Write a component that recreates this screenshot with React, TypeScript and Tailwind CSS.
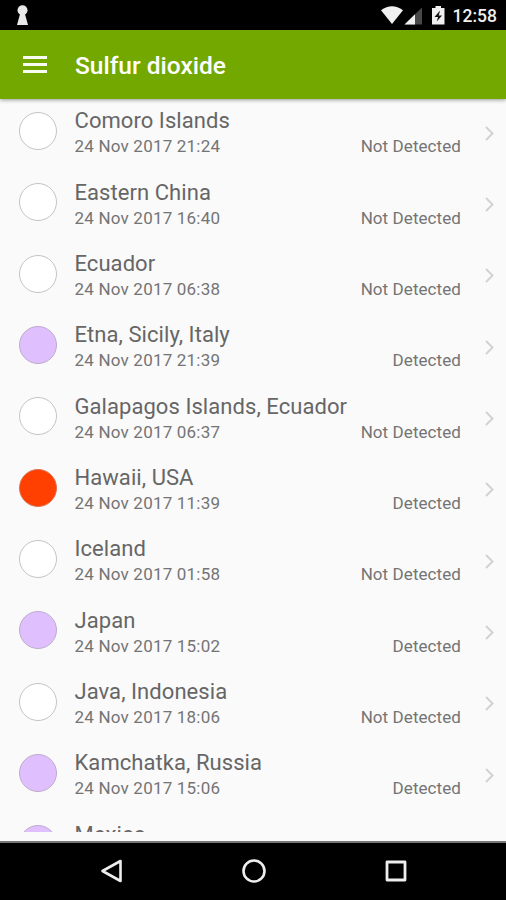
import React from 'react';

interface Reading {
    place: string;
    time: string;
    level: 'none' | 'low' | 'high';
}

const READINGS: Reading[] = [
    { place: 'Comoro Islands', time: '24 Nov 2017 21:24', level: 'none' },
    { place: 'Eastern China', time: '24 Nov 2017 16:40', level: 'none' },
    { place: 'Ecuador', time: '24 Nov 2017 06:38', level: 'none' },
    { place: 'Etna, Sicily, Italy', time: '24 Nov 2017 21:39', level: 'low' },
    { place: 'Galapagos Islands, Ecuador', time: '24 Nov 2017 06:37', level: 'none' },
    { place: 'Hawaii, USA', time: '24 Nov 2017 11:39', level: 'high' },
    { place: 'Iceland', time: '24 Nov 2017 01:58', level: 'none' },
    { place: 'Japan', time: '24 Nov 2017 15:02', level: 'low' },
    { place: 'Java, Indonesia', time: '24 Nov 2017 18:06', level: 'none' },
    { place: 'Kamchatka, Russia', time: '24 Nov 2017 15:06', level: 'low' },
    { place: 'Mexico', time: '', level: 'low' },
];

const DOT_STYLES = {
    none: 'bg-white border-[#c4c4c4]',
    low: 'bg-[#e0bfff] border-[#bdabcc]',
    high: 'bg-[#ff4000] border-[#e0704c]',
};

const StatusBar = () => (
    <div className="h-[30px] shrink-0 bg-black flex items-center pl-[17px] pr-[9px]">
        <svg className="w-3 h-5" viewBox="0 0 12 20" fill="#e9e9e9">
            <circle cx="5.5" cy="5.3" r="5" />
            <path d="M3.3 8h4.4L11 20H0z" />
        </svg>
        <svg className="w-[65px] h-[22px] ml-auto" viewBox="0 0 65 22">
            <path d="M1 6.2Q12 -1.8 23 6.2L12 20Z" fill="#f0f0f0" />
            <path d="M42 3.5V20.5H24.5Z" fill="#484848" />
            <path d="M35 10.3V20.5H24.5Z" fill="#f0f0f0" />
            <path d="M55.5 2h5.5v2H64.5v16.5H52V4h3.5z" fill="#f0f0f0" />
            <path d="M60.1 6.5L54.5 12.9h3.6L56.7 17.5l5.4-6h-3.4z" fill="#111" />
        </svg>
        <span className="ml-[8px] mt-[3px] text-[17.5px] leading-none font-medium text-[#f0f0f0]">12:58</span>
    </div>
);

const Toolbar = () => (
    <header className="h-[69px] shrink-0 bg-[#73a800] flex items-center pl-[23px] shadow-[0_1px_4px_rgba(0,0,0,0.4)] z-10">
        <svg className="w-6 h-[17px]" viewBox="0 0 24 17" fill="#f8fbf2">
            <path d="M0 0h24v3H0zM0 7h24v3H0zM0 14h24v3H0z" />
        </svg>
        <h1 className="ml-[28px] mt-[3px] text-[24.5px] leading-none font-medium text-white">Sulfur dioxide</h1>
    </header>
);

const ReadingRow: React.FC<{ reading: Reading }> = ({ reading }) => (
    <li className="h-[71.35px] flex items-start pl-[18.5px] pr-[12.5px]">
        <div className={`w-[38px] h-[38px] mt-[17px] shrink-0 rounded-full border ${DOT_STYLES[reading.level]}`} />
        <div className="ml-[18px] pt-[13.2px] flex-1">
            <p className="text-[22px] leading-[26px] tracking-[0.06px] text-[#666]">{reading.place}</p>
            {reading.time && (
                <div className="flex justify-between text-[17px] leading-[25px] text-[#747474]">
                    <span className="tracking-[0.2px]">{reading.time}</span>
                    <span className="tracking-[0.08px]">{reading.level === 'none' ? 'Not Detected' : 'Detected'}</span>
                </div>
            )}
        </div>
        <svg className="w-[9px] h-[15px] mt-[30.5px] ml-[23.5px] shrink-0" viewBox="0 0 9 15" fill="none" stroke="#d2d2d2" strokeWidth="2">
            <path d="M1 1l6.5 6.5L1 14" />
        </svg>
    </li>
);

const NavBar = () => (
    <nav className="h-[59px] shrink-0 bg-black border-t-2 border-[#777] flex items-center justify-center gap-[118px] pl-[2px] pb-[2px]">
        <svg className="w-6 h-6" viewBox="0 0 24 24" fill="none" stroke="#eee" strokeWidth="2.6" strokeLinejoin="round">
            <path d="M20.5 2v20L2.5 12z" />
        </svg>
        <svg className="w-6 h-6" viewBox="0 0 24 24" fill="none" stroke="#eee" strokeWidth="2.6">
            <circle cx="12" cy="12" r="10.5" />
        </svg>
        <svg className="w-6 h-6" viewBox="0 0 24 24" fill="none" stroke="#eee" strokeWidth="2.8" strokeLinejoin="round">
            <path d="M3 3h18v18H3z" />
        </svg>
    </nav>
);

const App = () => (
    <div className="w-[506px] h-[900px] flex flex-col overflow-hidden bg-[#fafafa] font-[Roboto,sans-serif]">
        <StatusBar />
        <Toolbar />
        <main className="flex-1 min-h-0 pb-[9px]">
            <div className="h-full overflow-hidden">
                <ul className="-mt-[4px]">
                    {READINGS.map(r => (
                        <ReadingRow key={r.place} reading={r} />
                    ))}
                </ul>
            </div>
        </main>
        <NavBar />
    </div>
);

export default App;
